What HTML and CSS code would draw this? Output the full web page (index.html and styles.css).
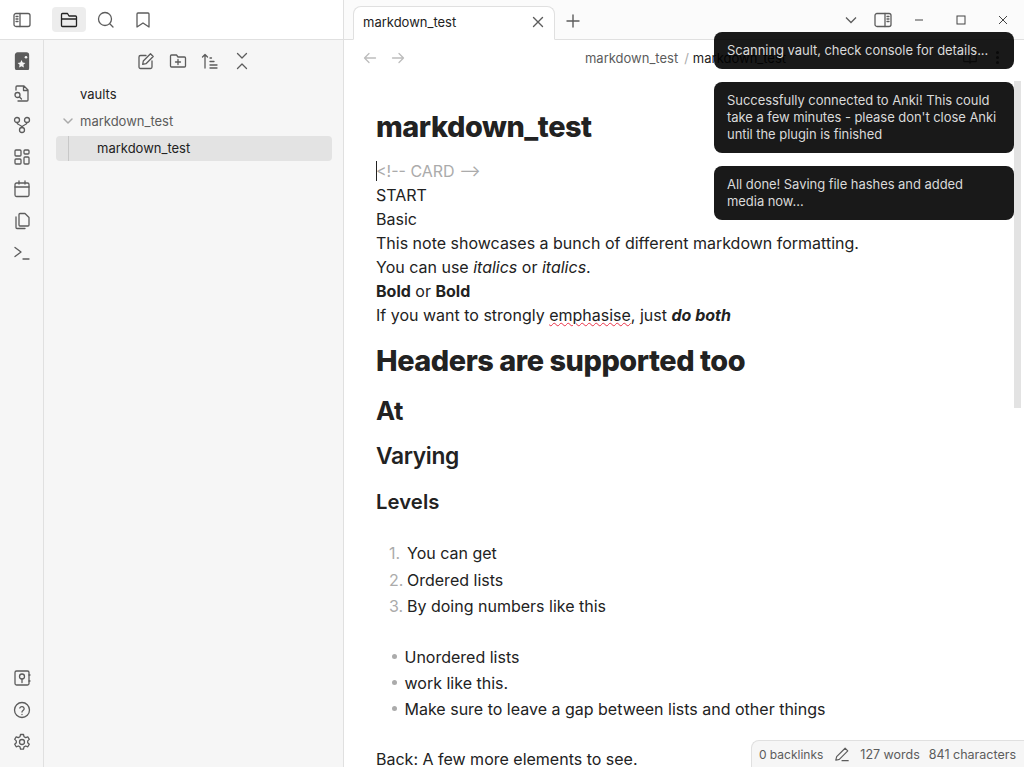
FILE: index.html
```html
<!DOCTYPE html>
<html lang="en">
<head>
    <meta charset="UTF-8">
    <title>markdown_test - Obsidian</title>
    <link rel="stylesheet" href="styles.css">
</head>
<body>
    <div class="app">
        <aside class="sidebar">
            <div class="side-top">
                <span class="icon-btn toggle">
                    <svg class="icon" viewBox="0 0 18 18"><rect x="1" y="2.500" width="16" height="13" rx="2"/><path d="M7 2.500v13M3 5.500h2M3 8h2M3 10.500h2"/></svg>
                </span>
                <div class="side-tabs">
                    <span class="icon-btn active">
                        <svg class="icon dark" viewBox="0 0 18 18"><path d="M2.500 15.500h13a1 1 0 0 0 1-1V6a1 1 0 0 0-1-1H9L7.500 2.500h-5a1 1 0 0 0-1 1v11a1 1 0 0 0 1 1zM1.500 8h15"/></svg>
                    </span>
                    <span class="icon-btn">
                        <svg class="icon" viewBox="0 0 18 18"><circle cx="8" cy="8" r="6.500"/><path d="M13 13l3 3"/></svg>
                    </span>
                    <span class="icon-btn">
                        <svg class="icon" viewBox="0 0 18 18"><path d="M4 2h10a1 1 0 0 1 1 1v13l-6-4-6 4V3a1 1 0 0 1 1-1z"/></svg>
                    </span>
                </div>
            </div>
            <div class="side-body">
                <nav class="ribbon">
                    <div class="ribbon-group">
                        <svg class="icon rib" viewBox="0 0 18 18"><rect class="solid" x="2.500" y="1" width="13" height="17" rx="2"/><path class="cut" d="M8.500 8l1.200 2.500 2.700.4-2 1.900.5 2.700-2.400-1.300-2.400 1.300.5-2.700-2-1.900 2.700-.4z"/><circle class="cut" cx="13" cy="5.300" r="1.300"/></svg>
                        <svg class="icon rib" viewBox="0 0 18 18"><path d="M3 6V3a1 1 0 0 1 1-1h7l4 4v10a1 1 0 0 1-1 1H5M10.500 2v4.500H15"/><circle cx="4.500" cy="11" r="2.500"/><path d="M6.500 13l2 2"/></svg>
                        <svg class="icon rib" viewBox="0 0 18 18"><circle cx="4" cy="4" r="2.500"/><circle cx="14" cy="4" r="2.500"/><circle cx="9" cy="14" r="2.500"/><path d="M4 6.500c0 3 5 2 5 5M14 6.500c0 3-5 2-5 5"/></svg>
                        <svg class="icon rib" viewBox="0 0 18 18"><rect x="2" y="2" width="6" height="6" rx="1"/><rect x="11" y="2" width="5" height="4" rx="1"/><rect x="2" y="11" width="6" height="5" rx="1"/><rect x="11" y="9" width="5" height="7" rx="1"/></svg>
                        <svg class="icon rib" viewBox="0 0 18 18"><rect x="2" y="3" width="14" height="13.500" rx="1.500"/><path d="M2 7h14M6 1v3M12 1v3"/></svg>
                        <svg class="icon rib" viewBox="0 0 18 18"><path d="M7 1.500h5l4 4V13a1 1 0 0 1-1 1H7a1 1 0 0 1-1-1V2.500a1 1 0 0 1 1-1zM3 5v10.500a1 1 0 0 0 1 1h8"/></svg>
                        <svg class="icon rib" viewBox="0 0 18 18"><path d="M2 3.500l6 4.500-6 4.500M10 15h6"/></svg>
                    </div>
                    <div class="ribbon-group">
                        <svg class="icon rib" viewBox="0 0 18 18"><rect x="2" y="2" width="14" height="14" rx="1.500"/><circle cx="9" cy="7.500" r="2.500"/><path d="M9 10v3.500M16 6h1M16 12h1"/></svg>
                        <svg class="icon rib" viewBox="0 0 18 18"><circle cx="9" cy="9" r="7.500"/><path d="M6.800 7a2.300 2.300 0 0 1 4.400.7c0 1.500-2.200 2-2.200 3.300M9 13.300v.2"/></svg>
                        <svg class="icon rib" viewBox="0 0 18 18"><path d="M7.500 1.500h3l.5 2.200 1.700.9 2.100-.8 1.500 2.600-1.600 1.500v1.800l1.600 1.500-1.500 2.600-2.100-.8-1.700.9-.5 2.200h-3L7 13.900l-1.700-.9-2.100.8-1.500-2.600 1.600-1.500V7.900L1.700 6.400l1.500-2.600 2.100.8L7 3.700z"/><circle cx="9" cy="9" r="2.500"/></svg>
                    </div>
                </nav>
                <section class="files">
                    <div class="file-actions">
                        <svg class="icon act" viewBox="0 0 18 18"><path d="M15 9v6a1.500 1.500 0 0 1-1.500 1.500h-10A1.500 1.500 0 0 1 2 15V5a1.500 1.500 0 0 1 1.500-1.500H9"/><path d="M13.500 1.800l2.700 2.700L9 11.700l-3.300.6.600-3.300z"/></svg>
                        <svg class="icon act" viewBox="0 0 18 18"><path d="M2.500 15h13a1 1 0 0 0 1-1V6a1 1 0 0 0-1-1H9L7.500 3h-5a1 1 0 0 0-1 1v10a1 1 0 0 0 1 1zM9 7.500v5M6.500 10h5"/></svg>
                        <svg class="icon act" viewBox="0 0 18 18"><path d="M1.500 5L4 2.500 6.500 5M4 2.500V16M9 6h1.500M9 9.500h4M9 13h7M9 16h7"/></svg>
                        <svg class="icon act" viewBox="0 0 18 18"><path d="M4.500 1.500L9 6l4.500-4.500M4.500 16.500L9 12l4.500 4.500"/></svg>
                    </div>
                    <ul class="tree">
                        <li class="tree-item root">vaults</li>
                        <li class="tree-item folder">
                            <svg class="chevron" viewBox="0 0 12 12"><path d="M2 4l4 4 4-4"/></svg>
                            markdown_test
                        </li>
                        <li class="tree-item file">markdown_test</li>
                    </ul>
                </section>
            </div>
        </aside>

        <main class="main">
            <header class="tabbar">
                <div class="tab">
                    <span>markdown_test</span>
                    <svg class="tab-close" viewBox="0 0 14 14"><path d="M2.500 2.500l9 9M11.500 2.500l-9 9"/></svg>
                </div>
                <svg class="tab-add" viewBox="0 0 14 14"><path d="M7 1v12M1 7h12"/></svg>
                <div class="window-controls">
                    <svg class="win chev" viewBox="0 0 12 12"><path d="M1 3.500l5 5 5-5"/></svg>
                    <svg class="icon win-side" viewBox="0 0 18 18"><rect x="1" y="2.500" width="16" height="13" rx="2"/><path d="M11 2.500v13M13 5.500h2M13 8h2M13 10.500h2"/></svg>
                    <svg class="win" viewBox="0 0 12 12"><path d="M2 6h8"/></svg>
                    <svg class="win" viewBox="0 0 12 12"><rect x="2" y="2" width="8" height="8"/></svg>
                    <svg class="win" viewBox="0 0 12 12"><path d="M2 2l8 8M10 2l-8 8"/></svg>
                </div>
            </header>
            <div class="view-header">
                <div class="nav-arrows">
                    <svg class="arrow" viewBox="0 0 14 14"><path d="M12.500 7h-11M6 2.500L1.500 7 6 11.500"/></svg>
                    <svg class="arrow" viewBox="0 0 14 14"><path d="M1.500 7h11M8 2.500L12.500 7 8 11.500"/></svg>
                </div>
                <div class="breadcrumb">
                    <span>markdown_test</span>
                    <span class="sep">/</span>
                    <span class="current">markdown_test</span>
                </div>
                <div class="view-actions">
                    <svg class="icon view-book" viewBox="0 0 18 18"><path d="M2 4h5a2 2 0 0 1 2 2v9a2 2 0 0 0-2-2H2zM16 4h-5a2 2 0 0 0-2 2v9a2 2 0 0 1 2-2h5z"/></svg>
                    <span class="dots"></span>
                </div>
            </div>
            <article class="editor">
                <h1 class="inline-title">markdown_test</h1>
                <p class="line comment"><span class="caret"></span>&lt;!-- CARD --&gt;</p>
                <p class="line">START</p>
                <p class="line">Basic</p>
                <p class="line">This note showcases a bunch of different markdown formatting.</p>
                <p class="line">You can use <em>italics</em> or <em>italics</em>.</p>
                <p class="line"><strong>Bold</strong> or <strong>Bold</strong></p>
                <p class="line">If you want to strongly <span class="misspelt">emphasise</span>, just <strong><em>do both</em></strong></p>
                <h2 class="h-one">Headers are supported too</h2>
                <h3 class="h-two">At</h3>
                <h4 class="h-three">Varying</h4>
                <h5 class="h-four">Levels</h5>
                <ol class="numbered">
                    <li><span class="num">1.</span>You can get</li>
                    <li><span class="num">2.</span>Ordered lists</li>
                    <li><span class="num">3.</span>By doing numbers like this</li>
                </ol>
                <ul class="bullets">
                    <li>Unordered lists</li>
                    <li>work like this.</li>
                    <li>Make sure to leave a gap between lists and other things</li>
                </ul>
                <p class="line back">Back: A few more elements to see.</p>
            </article>
        </main>
    </div>

    <div class="scrollbar"></div>

    <div class="notices">
        <div class="notice">Scanning vault, check console for details...</div>
        <div class="notice">Successfully connected to Anki! This could take a few minutes - please don't close Anki until the plugin is finished</div>
        <div class="notice">All done! Saving file hashes and added media now...</div>
    </div>

    <footer class="status-bar">
        <span class="backlinks">0 backlinks</span>
        <svg class="icon pencil" viewBox="0 0 18 18"><path d="M12.500 2.500l3 3L6 15l-4 1 1-4zM9 16.500h7"/></svg>
        <span>127 words</span>
        <span>841 characters</span>
    </footer>
</body>
</html>
```

FILE: styles.css
```css
* {
    box-sizing: border-box;
}
html, body {
    height: 100%;
}
body {
    margin: 0;
    overflow: hidden;
    background: #fff;
    color: #222;
    font-family: "Inter", "Liberation Sans", sans-serif;
    font-size: 16px;
}
svg {
    display: block;
    flex: none;
    fill: none;
    stroke-linecap: round;
    stroke-linejoin: round;
}
.icon {
    width: 18px;
    height: 18px;
    stroke: #5c5c5c;
    stroke-width: 1.3;
}
.icon.dark {
    stroke: #222;
}
.app {
    display: flex;
    height: 767px;
}

/* left side */
.sidebar {
    width: 344px;
    flex: none;
    display: flex;
    flex-direction: column;
    border-right: 1px solid #e0e0e0;
}
.side-top {
    height: 40px;
    flex: none;
    display: flex;
    align-items: center;
    padding-left: 13px;
    background: #fff;
    border-bottom: 1px solid #e0e0e0;
}
.icon-btn {
    width: 34px;
    height: 25px;
    display: flex;
    align-items: center;
    justify-content: center;
    border-radius: 4px;
}
.icon-btn.toggle {
    width: 18px;
}
.icon-btn.active {
    background: #ededed;
}
.side-tabs {
    display: flex;
    gap: 3px;
    margin-left: 21px;
}
.side-body {
    flex: 1;
    display: flex;
    background: #f6f6f6;
}
.ribbon {
    width: 44px;
    flex: none;
    display: flex;
    flex-direction: column;
    justify-content: space-between;
    align-items: center;
    padding: 12px 0 16px;
    border-right: 1px solid #e0e0e0;
}
.ribbon-group {
    display: flex;
    flex-direction: column;
    gap: 14px;
}
.solid {
    fill: #5c5c5c;
}
.cut {
    fill: #f6f6f6;
    stroke: none;
}
.files {
    flex: 1;
    padding: 12px 11px 0 12px;
}
.file-actions {
    display: flex;
    justify-content: center;
    gap: 14px;
    height: 18px;
}
.tree {
    list-style: none;
    margin: 12px 0 0;
    padding: 0;
}
.tree-item {
    height: 25px;
    margin-bottom: 2px;
    padding-bottom: 1px;
    display: flex;
    align-items: center;
    font-size: 13px;
    color: #222;
}
.tree-item.root {
    padding-left: 24px;
}
.tree-item.folder {
    color: #5c5c5c;
    padding-left: 6px;
}
.chevron {
    width: 12px;
    height: 12px;
    margin-right: 6px;
    stroke: #aaa;
    stroke-width: 1.5;
}
.tree-item.file {
    padding-left: 41px;
    background: #e3e3e3;
    border-radius: 4px;
    position: relative;
}
.tree-item.file::before {
    content: "";
    position: absolute;
    left: 12px;
    top: 0;
    bottom: 0;
    width: 1px;
    background: #c8c8c8;
}

/* main area */
.main {
    flex: 1;
    min-width: 0;
    display: flex;
    flex-direction: column;
    overflow: hidden;
}
.tabbar {
    height: 40px;
    flex: none;
    display: flex;
    align-items: flex-end;
    padding-left: 9px;
    background: #fbfbfb;
    border-bottom: 1px solid #e0e0e0;
}
.tab {
    width: 202px;
    height: 34px;
    margin-bottom: -1px;
    padding: 0 0 2px 9px;
    display: flex;
    align-items: center;
    justify-content: space-between;
    font-size: 13px;
    color: #222;
    background: #fff;
    border: 1px solid #e0e0e0;
    border-bottom-color: #fff;
    border-radius: 8px 8px 0 0;
}
.tab-close {
    width: 14px;
    height: 14px;
    margin-right: 9px;
    stroke: #5c5c5c;
    stroke-width: 1.4;
}
.tab-add {
    width: 14px;
    height: 14px;
    margin: 0 0 11px 11px;
    stroke: #5c5c5c;
    stroke-width: 1.4;
}
.window-controls {
    margin-left: auto;
    height: 39px;
    display: flex;
    align-items: center;
    padding-right: 15px;
}
.win {
    width: 12px;
    height: 12px;
    margin-left: 30px;
    stroke: #444;
    stroke-width: 1;
    stroke-linecap: butt;
    stroke-linejoin: miter;
}
.win.chev {
    margin-left: 0;
    stroke: #5c5c5c;
    stroke-width: 1.3;
}
.win-side {
    margin-left: 17px;
    margin-right: -9px;
}
.view-header {
    height: 35px;
    flex: none;
    display: flex;
    align-items: center;
    padding: 0 25px 0 19px;
    position: relative;
}
.nav-arrows {
    display: flex;
    gap: 14px;
}
.arrow {
    width: 14px;
    height: 14px;
    stroke: #bdbdbd;
    stroke-width: 1.3;
}
.breadcrumb {
    flex: 1;
    display: flex;
    justify-content: center;
    gap: 6px;
    padding-left: 4px;
    font-size: 13px;
    color: #5c5c5c;
}
.breadcrumb .sep {
    margin-right: -2px;
    color: #ababab;
}
.breadcrumb .current {
    color: #222;
}
.view-actions {
    display: flex;
    align-items: center;
    gap: 18px;
}
.view-book {
    width: 16px;
    height: 16px;
}
.dots {
    width: 3px;
    height: 3px;
    border-radius: 50%;
    background: #5c5c5c;
    box-shadow: 0 -5px 0 #5c5c5c, 0 5px 0 #5c5c5c;
}

/* note content */
.editor {
    padding: 0 32px;
}
.inline-title {
    margin: 34px 0 14px;
    font-size: 28.830px;
    line-height: 36px;
    font-weight: 800;
    letter-spacing: -0.015em;
}
.line {
    margin: 0;
    height: 24px;
    line-height: 24px;
    white-space: nowrap;
    position: relative;
}
.comment {
    color: #ababab;
}
.caret {
    position: absolute;
    left: 0;
    top: 2px;
    width: 1px;
    height: 20px;
    background: #222;
}
.misspelt {
    text-decoration: underline wavy #e93147 1px;
}
.h-one {
    margin: 16px 0 0;
    font-size: 28.830px;
    line-height: 36px;
    font-weight: 800;
    letter-spacing: -0.015em;
}
.h-two {
    margin: 16px 0 0;
    font-size: 25.630px;
    line-height: 32px;
    font-weight: 700;
    letter-spacing: -0.015em;
}
.h-three {
    margin: 14px 0 0;
    font-size: 22.780px;
    line-height: 30px;
    font-weight: 600;
    letter-spacing: -0.015em;
}
.h-four {
    margin: 18px 0 0;
    font-size: 20.250px;
    line-height: 26px;
    font-weight: 600;
    letter-spacing: 0.1px;
}
.numbered, .bullets {
    list-style: none;
    margin: 0;
    padding: 0;
}
.numbered {
    margin-top: 25px;
}
.numbered li {
    height: 26.500px;
    line-height: 26px;
    display: flex;
    padding-left: 13px;
}
.num {
    width: 18px;
    color: #ababab;
}
.bullets {
    margin-top: 24px;
}
.bullets li {
    height: 26px;
    line-height: 26px;
    padding-left: 28.500px;
    position: relative;
}
.bullets li::before {
    content: "";
    position: absolute;
    left: 16px;
    top: 10.500px;
    width: 5px;
    height: 5px;
    border-radius: 50%;
    background: #ababab;
}
.line.back {
    margin-top: 25px;
}

/* things floating above the page */
.scrollbar {
    position: absolute;
    left: 1014px;
    top: 81px;
    width: 7px;
    height: 327px;
    background: #e3e3e3;
}
.notices {
    position: absolute;
    top: 32px;
    left: 714px;
    width: 300px;
    display: flex;
    flex-direction: column;
    gap: 13.500px;
}
.notice {
    padding: 9.500px 13px 10px;
    background: rgba(0, 0, 0, 0.9);
    color: #dadada;
    font-size: 13px;
    line-height: 17px;
    letter-spacing: -0.05px;
    border-radius: 8px;
}
.status-bar {
    position: absolute;
    right: 0;
    bottom: 0;
    height: 27px;
    display: flex;
    align-items: center;
    gap: 9px;
    padding: 0 8px 0 7px;
    font-size: 12.500px;
    color: #5c5c5c;
    background: #f6f6f6;
    border: 1px solid #e0e0e0;
    border-width: 1px 0 0 1px;
    border-radius: 8px 0 0 0;
}
.backlinks {
    font-size: 12px;
}
.pencil {
    width: 16px;
    height: 16px;
    margin: 0 1px 0 2px;
}
```
